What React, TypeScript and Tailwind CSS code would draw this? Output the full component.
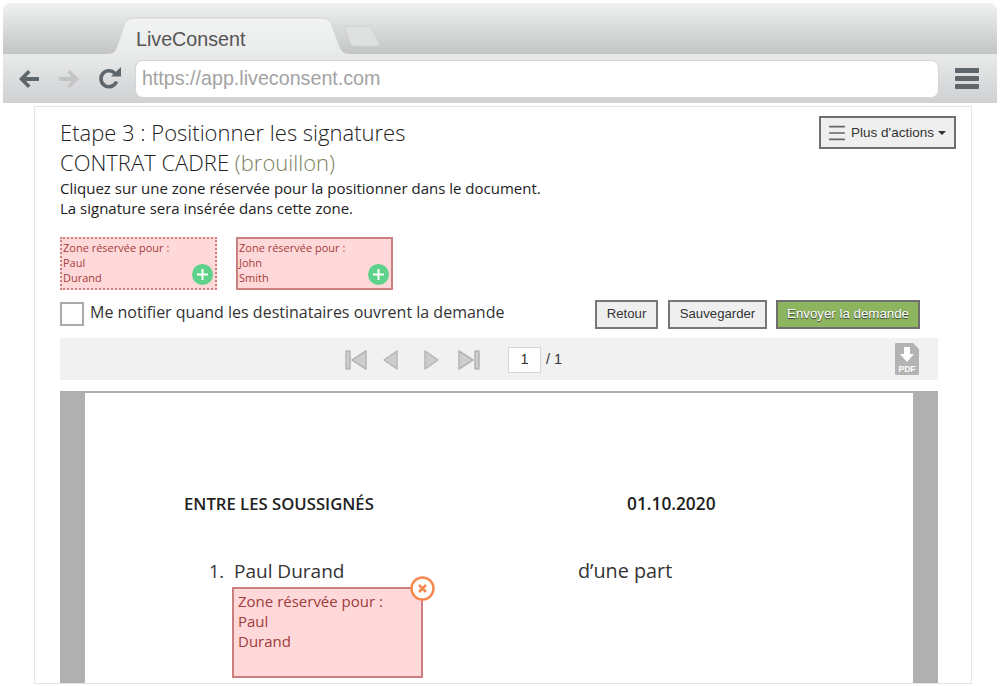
import { Menu } from 'lucide-react';

const openSans = 'font-["Open_Sans",sans-serif]';
const arial = 'font-["Liberation_Sans",Arial,sans-serif]';

// Reserved zone chip shown above the document
const ZoneChip = ({ first, last, dashed }: { first: string; last: string; dashed?: boolean }) => (
  <div
    className={`relative w-[157px] h-[53px] bg-[#ffd9d9] border-2 border-[#cc7f7f] pl-[1px] pt-[0.5px] text-[11px] leading-[15px] text-[#a53c3c] ${
      dashed ? 'border-dotted' : ''
    }`}
  >
    <div>Zone réservée pour :</div>
    <div>{first}</div>
    <div>{last}</div>
    <svg className="absolute right-[2.5px] bottom-[3.5px]" width="21" height="21" viewBox="0 0 21 21">
      <circle cx="10.5" cy="10.5" r="10.5" fill="#5ed28a" />
      <path d="M10.5 5v11M5 10.5h11" stroke="#fff" strokeWidth="2" />
    </svg>
  </div>
);

const PagerIcon = ({ d }: { d: string }) => (
  <svg width="22" height="24" viewBox="0 0 22 24">
    <path d={d} fill="#cdcdcd" stroke="#b5b5b5" strokeWidth="1.5" strokeLinejoin="round" />
  </svg>
);

const ActionButton = ({ label, className }: { label: string; className: string }) => (
  <button className={`h-[29px] border-2 border-[#777] bg-[#efefef] text-[13.2px] text-[#333] ${className}`}>
    {label}
  </button>
);

export default function App() {
  return (
    <div className={`w-[1000px] h-[686px] overflow-hidden bg-white ${openSans}`}>
      {/* Browser chrome */}
      <div className="mx-[3px] pt-[3px]">
        <div className="relative h-[51px] rounded-t-lg bg-gradient-to-b from-[#f0f1f1] to-[#c3c5c5]">
          <svg className="absolute left-[100px] top-[14px]" width="250" height="37" viewBox="0 0 250 37">
            <defs>
              <linearGradient id="tab" x1="0" y1="0" x2="0" y2="1">
                <stop offset="0" stopColor="#f2f3f3" />
                <stop offset="1" stopColor="#e9eaea" />
              </linearGradient>
            </defs>
            <path
              d="M4 37C10 37 12 35 14 30L21 8C23 3 26 1 31 1H219C224 1 227 3 229 8L236 28C238 33 240 37 246 37"
              fill="url(#tab)"
              stroke="#d2d3d3"
              strokeWidth="1"
            />
          </svg>
          <svg className="absolute left-[340px] top-[22px]" width="40" height="24" viewBox="0 0 40 24">
            <path
              d="M2 4C1 2 2 1 4 1H24C27 1 28 2 29 4L36 18C37 20 36 21 34 21H12C9 21 8 20 7 18Z"
              fill="#dfe0e0"
              stroke="#cfd0d0"
            />
          </svg>
          <span className={`absolute left-[133px] top-[24px] text-[19.7px] leading-[24px] text-[#555] ${arial}`}>
            LiveConsent
          </span>
        </div>
        <div className="h-[49px] flex items-center pl-[14px] pr-[18px] bg-gradient-to-b from-[#e9eaea] to-[#cfd0d2]">
          <svg width="24" height="20" viewBox="0 0 24 20">
            <path d="M11 1L2 10l9 9 2.5-2.5L9 12h13V8H9l4.500-4.500Z" fill="#5f666b" />
          </svg>
          <svg className="ml-[16px]" width="24" height="20" viewBox="0 0 24 20">
            <path d="M13 1l9 9-9 9-2.500-2.500L15 12H2V8h13l-4.500-4.500Z" fill="#c3c4c5" />
          </svg>
          <svg className="ml-[17px]" width="24" height="24" viewBox="0 0 24 24">
            <path d="M18.500 14.500A8 8 0 1 1 17 6.500" fill="none" stroke="#5f666b" strokeWidth="3.600" />
            <path d="M13 9.500h10V0Z" fill="#5f666b" />
          </svg>
          <div
            className={`ml-[13px] w-[805px] h-[38px] flex items-center pl-[6px] bg-white rounded-lg border border-[#d3d4d5] text-[19.7px] text-[#a3a3a3] ${arial}`}
          >
            https://app.liveconsent.com
          </div>
          <div className="ml-[16px] w-[24px] flex flex-col gap-[3px]">
            <div className="h-[5px] rounded-[1px] bg-[#5f666b]" />
            <div className="h-[5px] rounded-[1px] bg-[#5f666b]" />
            <div className="h-[5px] rounded-[1px] bg-[#5f666b]" />
          </div>
        </div>
      </div>

      {/* Page card */}
      <div className="ml-[34px] mt-[3px] w-[938px] h-[578px] overflow-hidden border border-[#e6e6de] px-[25px] bg-white">
        <div className="flex justify-between">
          <div>
            <h1 className="mt-[10px] text-[22px] leading-[30px] font-light text-[#222]">
              Etape 3 : Positionner les signatures
            </h1>
            <h2 className="text-[22px] leading-[30px] font-light text-[#222]">
              CONTRAT CADRE <span className="text-[#7f8263]">(brouillon)</span>
            </h2>
            <p className="mt-[1px] text-[15px] leading-[20px] text-[#222]">
              Cliquez sur une zone réservée pour la positionner dans le document.
              <br />
              La signature sera insérée dans cette zone.
            </p>
          </div>
          <button
            className={`mt-[9px] mr-[-10px] w-[137px] h-[33px] flex items-center justify-center gap-[3px] border-2 border-[#6f6f6f] bg-[#efefef] pr-[3px] pt-[1px] text-[13.5px] text-[#333] ${arial}`}
          >
            <Menu size={22} strokeWidth={1.800} className="text-[#666]" />
            Plus d'actions
            <span className="ml-[1px] w-0 h-0 border-x-[4px] border-x-transparent border-t-[4px] border-t-[#333]" />
          </button>
        </div>

        <div className="mt-[19px] flex gap-[19px]">
          <ZoneChip first="Paul" last="Durand" dashed />
          <ZoneChip first="John" last="Smith" />
        </div>

        <div className="mt-[10px] flex items-center h-[28px]">
          <div className="w-[24px] h-[24px] border-2 border-[#aaa] bg-white" />
          <span className="ml-[6px] mt-[-4px] text-[16px] text-[#333]">Me notifier quand les destinataires ouvrent la demande</span>
          <div className={`ml-auto mr-[26px] flex gap-[9px] ${arial}`}>
            <ActionButton label="Retour" className="w-[63px] mr-[1px]" />
            <ActionButton label="Sauvegarder" className="w-[99px]" />
            <button
              className="w-[144px] h-[29px] border-2 border-[#6f6f6f] bg-[#8db560] text-[13.3px] text-white [text-shadow:0_1px_1px_#333]"
            >
              Envoyer la demande
            </button>
          </div>
        </div>

        {/* PDF toolbar */}
        <div className="mt-[10px] w-[878px] h-[42px] flex items-center bg-[#f1f1f1] pl-[285px] pr-[19px] pt-[2px]">
          <PagerIcon d="M1 3h4v18H1ZM21 3v18L7 12Z" />
          <div className="ml-[15px]">
            <svg width="16" height="24" viewBox="0 0 16 24">
              <path d="M15 3v18L2 12Z" fill="#cdcdcd" stroke="#b5b5b5" strokeWidth="1.5" strokeLinejoin="round" />
            </svg>
          </div>
          <div className="ml-[26px]">
            <svg width="16" height="24" viewBox="0 0 16 24">
              <path d="M1 3v18l13-9Z" fill="#cdcdcd" stroke="#b5b5b5" strokeWidth="1.5" strokeLinejoin="round" />
            </svg>
          </div>
          <div className="ml-[18px]">
            <PagerIcon d="M1 3v18l14-9ZM17 3h4v18h-4Z" />
          </div>
          <div className={`ml-[28px] w-[33px] h-[26px] flex items-center justify-center bg-white border border-[#d5d5d5] text-[14.5px] text-[#333] ${arial}`}>
            1
          </div>
          <span className={`ml-[5px] text-[14.5px] text-[#333] ${arial}`}>/ 1</span>
          <svg className="ml-auto mt-[-2px]" width="24" height="32" viewBox="0 0 24 32">
            <path d="M1 0h17l6 6v25a1 1 0 0 1-1 1H1a1 1 0 0 1-1-1V1a1 1 0 0 1 1-1Z" fill="#b3b3b3" />
            <path d="M9 4h6v7h4l-7 8-7-8h4Z" fill="#fff" />
            <text x="12" y="29" textAnchor="middle" fontSize="8.500" fontWeight="700" fill="#fff" fontFamily="Liberation Sans">
              PDF
            </text>
          </svg>
        </div>

        {/* Document preview */}
        <div className="mt-[11px] w-[878px] h-[300px] bg-[#b0b0b0] px-[25px] pt-[2px]">
          <div className="h-full bg-white pt-[99px] text-[#333]">
            <div className="flex leading-[24px] font-semibold text-[#222]">
              <span className="ml-[99px] w-[443px] text-[16.7px]">ENTRE LES SOUSSIGNÉS</span>
              <span className="text-[17.3px]">01.10.2020</span>
            </div>
            <div className="mt-[42px] flex leading-[26px]">
              <span className="ml-[124px] w-[25px] text-[18px]">1.</span>
              <span className="w-[344px] text-[19px]">Paul Durand</span>
              <span className="text-[19.8px]">d’une part</span>
            </div>
            <div className="relative mt-[3px] ml-[147px] w-[191px] h-[91px] bg-[#ffd9d9] border-2 border-[#cc7f7f] px-[4px] pt-[1.5px] text-[15px] leading-[20px] text-[#a03c3c]">
              <div>Zone réservée pour :</div>
              <div>Paul</div>
              <div>Durand</div>
              <svg className="absolute right-[-14px] top-[-13.5px]" width="25" height="25" viewBox="0 0 25 25">
                <circle cx="12.500" cy="12.500" r="11" fill="#fff" stroke="#f5894f" strokeWidth="2.500" />
                <path d="M9 9l7 7M16 9l-7 7" stroke="#f5894f" strokeWidth="2.500" />
              </svg>
            </div>
          </div>
        </div>
      </div>
    </div>
  );
}
